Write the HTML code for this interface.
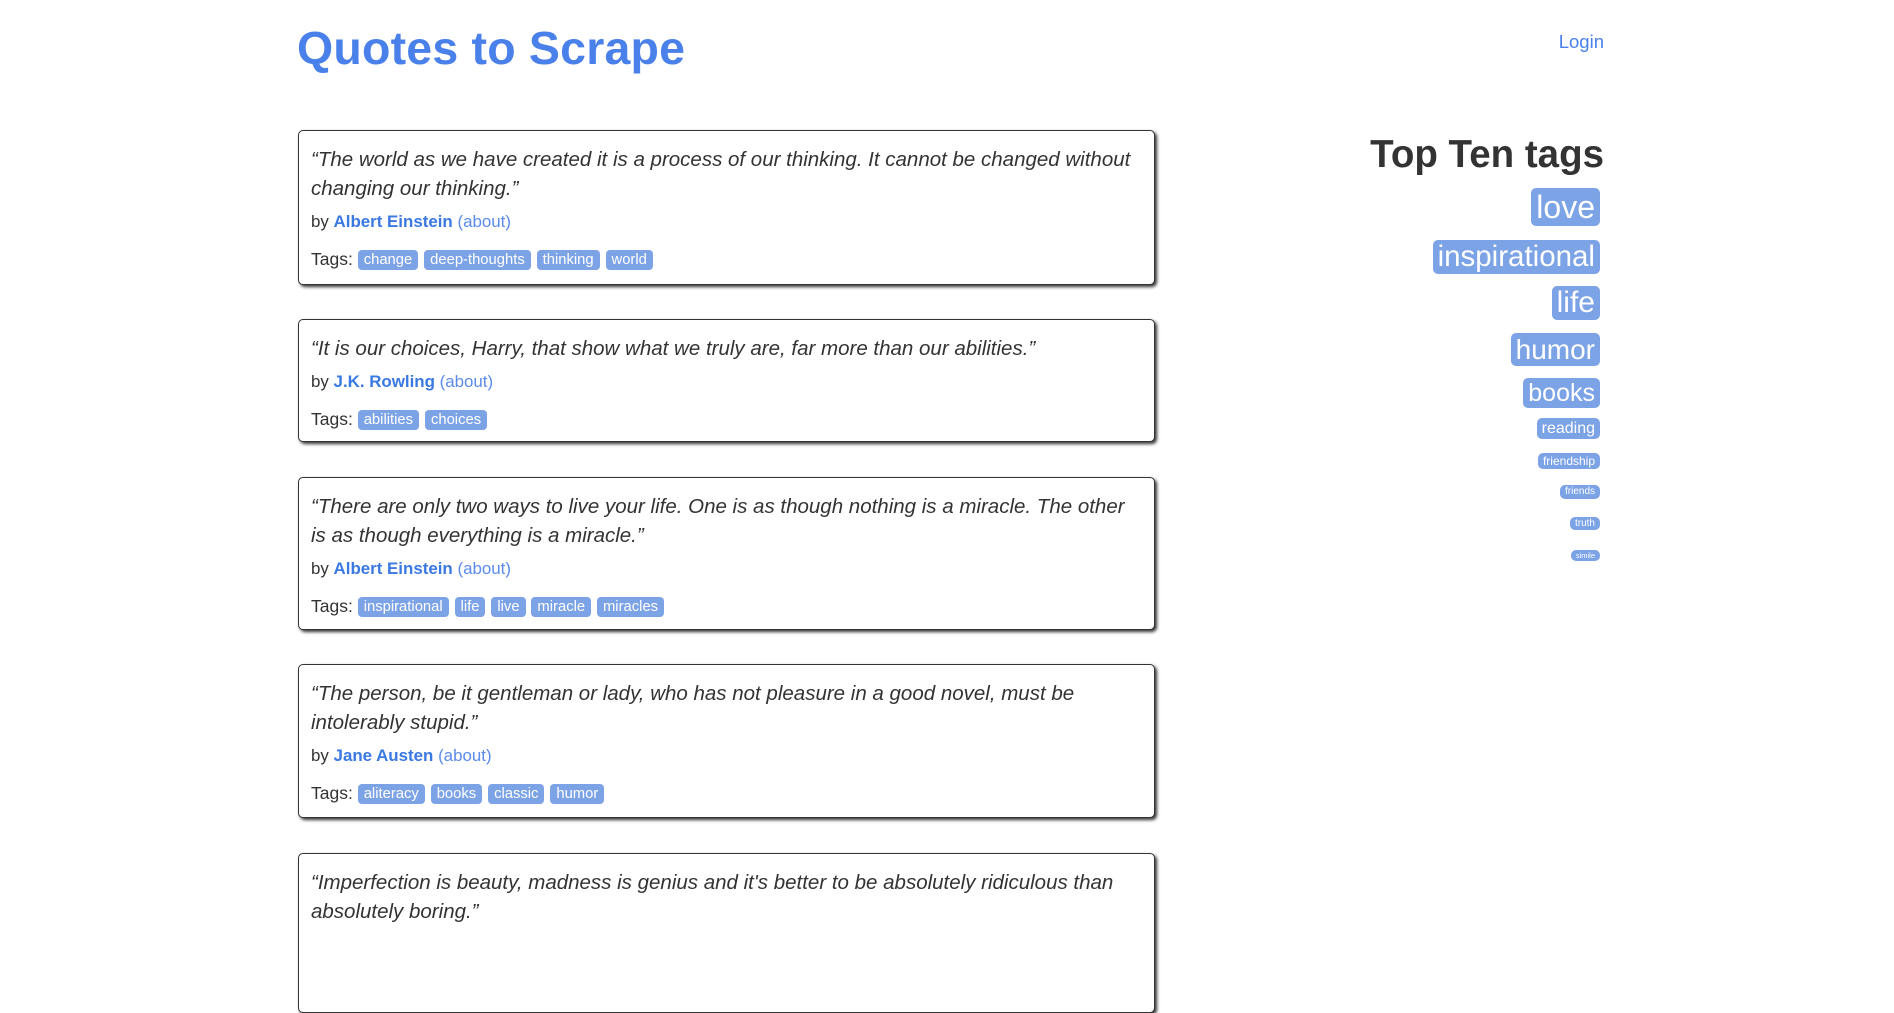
<!DOCTYPE html>
<html><head><meta charset="utf-8">
<style>
body{margin:0;background:#fff;font-family:"Liberation Sans",Arial,sans-serif;color:#333;width:1894px;height:911px;overflow:hidden;position:relative}
.title{position:absolute;left:297px;top:25px;font-size:46.5px;font-weight:bold;line-height:1;color:#4a80ea;white-space:nowrap;letter-spacing:0.2px}
.login{position:absolute;right:290px;top:31px;font-size:18.5px;line-height:22px;color:#4a80ea}
.q{position:absolute;left:298px;width:857px;border:1px solid #333;border-radius:5px;box-shadow:2px 2px 3px #333;padding:14px 12px 8px 12px;box-sizing:border-box;background:#fff}
.t{font-style:italic;font-size:20.5px;line-height:29px;color:#333}
.by{font-size:16.9px;line-height:29px;margin-top:4px}
.by b{color:#3a78e2}
.by span{color:#5b8bea}
.tags{font-size:17.5px;line-height:28px;margin-top:9px}
.tag{display:inline-block;background:#7ca3e6;color:#fff;font-size:14.8px;line-height:20px;padding:0 6px;border-radius:4px;margin-right:1px;vertical-align:1px}
.side{position:absolute;right:290px;top:136px;font-size:38.5px;font-weight:bold;line-height:1;color:#333;white-space:nowrap}
.st{position:absolute;right:294px;background:#7ca3e6;color:#fff;border-radius:5px;line-height:1;padding:0 5px;display:flex;align-items:center;white-space:nowrap}
</style></head><body>
<div class="title">Quotes to Scrape</div>
<div class="login">Login</div>

<div class="q" style="top:130px;height:155px">
<div class="t">“The world as we have created it is a process of our thinking. It cannot be changed without changing our thinking.”</div>
<div class="by">by <b>Albert Einstein</b> <span>(about)</span></div>
<div class="tags">Tags: <span class="tag">change</span> <span class="tag">deep-thoughts</span> <span class="tag">thinking</span> <span class="tag">world</span></div>
</div>

<div class="q" style="top:319px;height:123px">
<div class="t">“It is our choices, Harry, that show what we truly are, far more than our abilities.”</div>
<div class="by">by <b>J.K. Rowling</b> <span>(about)</span></div>
<div class="tags">Tags: <span class="tag">abilities</span> <span class="tag">choices</span></div>
</div>

<div class="q" style="top:477px;height:153px">
<div class="t">“There are only two ways to live your life. One is as though nothing is a miracle. The other is as though everything is a miracle.”</div>
<div class="by">by <b>Albert Einstein</b> <span>(about)</span></div>
<div class="tags">Tags: <span class="tag">inspirational</span> <span class="tag">life</span> <span class="tag">live</span> <span class="tag">miracle</span> <span class="tag">miracles</span></div>
</div>

<div class="q" style="top:664px;height:154px">
<div class="t">“The person, be it gentleman or lady, who has not pleasure in a good novel, must be intolerably stupid.”</div>
<div class="by">by <b>Jane Austen</b> <span>(about)</span></div>
<div class="tags">Tags: <span class="tag">aliteracy</span> <span class="tag">books</span> <span class="tag">classic</span> <span class="tag">humor</span></div>
</div>

<div class="q" style="top:853px;height:160px">
<div class="t">“Imperfection is beauty, madness is genius and it's better to be absolutely ridiculous than absolutely boring.”</div>
</div>

<div class="side">Top Ten tags</div>
<div class="st" style="top:188px;height:38px;font-size:32px">love</div>
<div class="st" style="top:240px;height:34px;font-size:29.5px">inspirational</div>
<div class="st" style="top:286px;height:34px;font-size:30px">life</div>
<div class="st" style="top:333px;height:33px;font-size:28px">humor</div>
<div class="st" style="top:378px;height:30px;font-size:25px">books</div>
<div class="st" style="top:418px;height:21px;font-size:16px">reading</div>
<div class="st" style="top:453px;height:16px;font-size:12px">friendship</div>
<div class="st" style="top:485px;height:14px;font-size:10px">friends</div>
<div class="st" style="top:517px;height:13px;font-size:10px">truth</div>
<div class="st" style="top:550px;height:11px;font-size:7.5px">simile</div>
</body></html>
